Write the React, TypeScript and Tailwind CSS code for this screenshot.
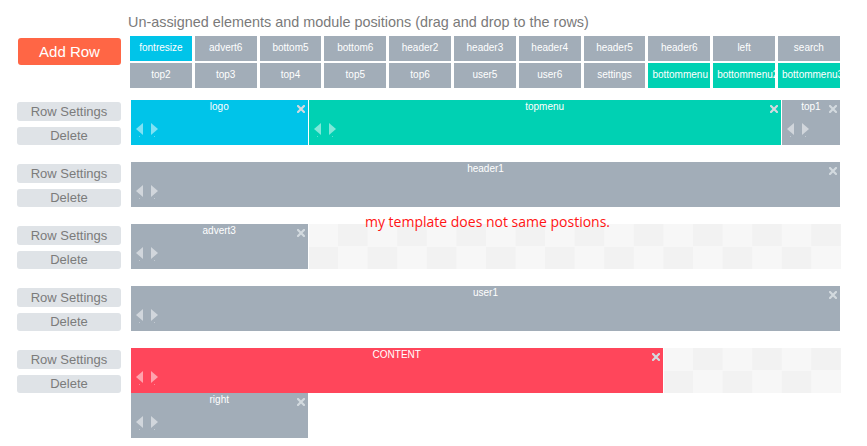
import React from "react";

type Chip = { name: string; color: string };

const GRAY = "bg-[#a2adb8]";
const CYAN = "bg-[#00c4e9]";
const TEAL = "bg-[#00d1b3]";
const RED = "bg-[#ff465b]";

const chips: Chip[] = [
  { name: "fontresize", color: CYAN },
  { name: "advert6", color: GRAY },
  { name: "bottom5", color: GRAY },
  { name: "bottom6", color: GRAY },
  { name: "header2", color: GRAY },
  { name: "header3", color: GRAY },
  { name: "header4", color: GRAY },
  { name: "header5", color: GRAY },
  { name: "header6", color: GRAY },
  { name: "left", color: GRAY },
  { name: "search", color: GRAY },
  { name: "top2", color: GRAY },
  { name: "top3", color: GRAY },
  { name: "top4", color: GRAY },
  { name: "top5", color: GRAY },
  { name: "top6", color: GRAY },
  { name: "user5", color: GRAY },
  { name: "user6", color: GRAY },
  { name: "settings", color: GRAY },
  { name: "bottommenu", color: TEAL },
  { name: "bottommenu2", color: TEAL },
  { name: "bottommenu3", color: TEAL },
];

const WIDTHS: Record<number, string> = {
  1: "w-[59.1667px]",
  3: "w-[177.5px]",
  8: "w-[473.333px]",
  9: "w-[532.5px]",
  12: "w-[710px]",
};

type Mod = { name: string; cols: number; color: string };

const CHECKER =
  "bg-[conic-gradient(#f2f2f2_25%,#f7f7f7_0_50%,#f2f2f2_0_75%,#f7f7f7_0)] bg-size-[59.1667px_45px]";

function CloseIcon() {
  return (
    <svg width="8" height="8" viewBox="0 0 8 8" className="block">
      <path d="M1 1 L7 7 M7 1 L1 7" stroke="#d3dadf" strokeWidth="2.2" strokeLinecap="square" />
    </svg>
  );
}

function Arrows() {
  return (
    <div className="flex items-start gap-[8px] pl-[5px] mt-[10px]">
      <svg width="7" height="14" viewBox="0 0 7 14" className="block">
        <polygon points="7,0 7,12 0,6" fill="rgba(255,255,255,0.5)" />
        <rect x="3" y="13" width="1" height="1" fill="rgba(255,255,255,0.35)" />
      </svg>
      <svg width="7" height="14" viewBox="0 0 7 14" className="block">
        <polygon points="0,0 0,12 7,6" fill="rgba(255,255,255,0.5)" />
        <rect x="3" y="13" width="1" height="1" fill="rgba(255,255,255,0.35)" />
      </svg>
    </div>
  );
}

function Block({ m }: { m: Mod }) {
  return (
    <div
      className={`relative h-[45px] shrink-0 border-r border-white ${WIDTHS[m.cols]} ${m.color} flex flex-col`}
    >
      <div className="pt-[1px] text-center text-[10px] leading-[12px] text-white">{m.name}</div>
      <div className="absolute top-[5px] right-[3px]">
        <CloseIcon />
      </div>
      <Arrows />
    </div>
  );
}

function RowButtons() {
  return (
    <div className="w-[104px] shrink-0 flex flex-col">
      <button className="mt-[2px] h-[19px] w-full rounded-[3px] bg-[#dfe3e7] text-[13px] leading-[19px] text-[#7b7b7b]">
        Row Settings
      </button>
      <button className="mt-[6px] h-[18px] w-full rounded-[3px] bg-[#dfe3e7] text-[13px] leading-[18px] text-[#7b7b7b]">
        Delete
      </button>
    </div>
  );
}

function Row({ lines }: { lines: Mod[][] }) {
  return (
    <div className="flex gap-[10px] pl-[17px] mb-[17px]">
      <RowButtons />
      <div className="flex flex-col w-[710px]">
        {lines.map((line, i) =>
          i === 0 ? (
            <div key={i} className={`flex h-[45px] ${CHECKER}`}>
              {line.map((m) => (
                <Block key={m.name} m={m} />
              ))}
            </div>
          ) : (
            <div key={i} className="flex h-[45px]">
              {line.map((m) => (
                <Block key={m.name} m={m} />
              ))}
            </div>
          )
        )}
      </div>
    </div>
  );
}

export default function App() {
  return (
    <div
      className="relative w-[867px] h-[446px] overflow-hidden bg-white"
      style={{ fontFamily: '"Liberation Sans", Arial, sans-serif' }}
    >
      <div className="pt-[14px] flex">
        <div className="w-[128px] shrink-0 pl-[18px]">
          <button className="mt-[24px] h-[27px] w-[103px] rounded-[3px] bg-[#ff6645] text-[15px] leading-[27px] text-white">
            Add Row
          </button>
        </div>
        <div className="flex flex-col">
          <div className="text-[14.4px] leading-[16px] text-[#7a7a7a] whitespace-nowrap">
            Un-assigned elements and module positions (drag and drop to the rows)
          </div>
          <div className="mt-[6px] ml-[2px] grid grid-cols-[repeat(11,61.8px)] gap-x-[3px] gap-y-[2px]">
            {chips.map((c) => (
              <div
                key={c.name}
                className={`h-[25px] overflow-hidden whitespace-nowrap px-[4px] text-center text-[10px] leading-[23px] text-white ${c.color}`}
              >
                {c.name}
              </div>
            ))}
          </div>
        </div>
      </div>

      <div className="mt-[12px]">
        <Row
          lines={[
            [
              { name: "logo", cols: 3, color: CYAN },
              { name: "topmenu", cols: 8, color: TEAL },
              { name: "top1", cols: 1, color: GRAY },
            ],
          ]}
        />
        <Row lines={[[{ name: "header1", cols: 12, color: GRAY }]]} />
        <Row lines={[[{ name: "advert3", cols: 3, color: GRAY }]]} />
        <Row lines={[[{ name: "user1", cols: 12, color: GRAY }]]} />
        <Row
          lines={[
            [{ name: "CONTENT", cols: 9, color: RED }],
            [{ name: "right", cols: 3, color: GRAY }],
          ]}
        />
      </div>

      <div
        className="absolute left-[365px] top-[213px] text-[14px] leading-[18px] text-[#ff1414] whitespace-nowrap"
        style={{ fontFamily: '"Open Sans", "Noto Sans", sans-serif' }}
      >
        my template does not same postions.
      </div>
    </div>
  );
}
